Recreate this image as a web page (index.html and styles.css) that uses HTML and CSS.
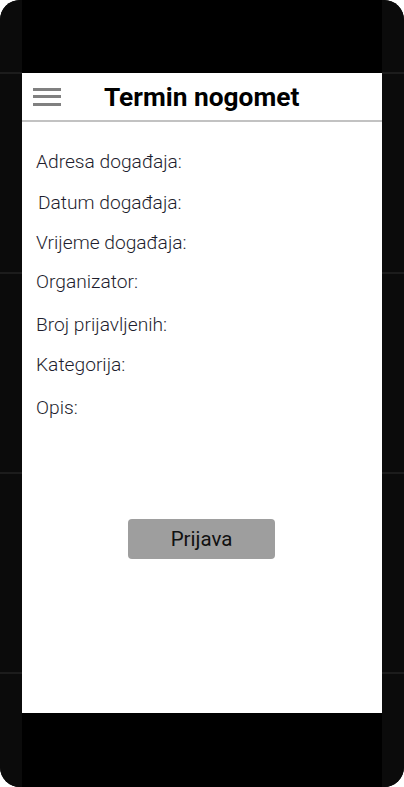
FILE: index.html
```html
<!DOCTYPE html>
<html>
<head>
<meta charset="utf-8">
<link rel="stylesheet" href="styles.css">
</head>
<body>
<div class="phone">
  <div class="side"></div>
  <div class="middle">
    <div class="bezel-top"></div>
    <div class="screen">
      <header class="appbar">
        <svg class="menu" width="28" height="20" viewBox="0 0 28 20">
          <rect x="0" y="1" width="28" height="3" fill="#808080"/>
          <rect x="0" y="8" width="28" height="3" fill="#808080"/>
          <rect x="0" y="16" width="28" height="3" fill="#808080"/>
        </svg>
        <h1 class="title">Termin nogomet</h1>
      </header>
      <div class="fields">
        <div class="field f1">Adresa događaja:</div>
        <div class="field f2">Datum događaja:</div>
        <div class="field f3">Vrijeme događaja:</div>
        <div class="field f4">Organizator:</div>
        <div class="field f5">Broj prijavljenih:</div>
        <div class="field f6">Kategorija:</div>
        <div class="field f7">Opis:</div>
      </div>
      <div class="actions">
        <button class="btn">Prijava</button>
      </div>
    </div>
    <div class="bezel-bottom"></div>
  </div>
  <div class="side"></div>
</div>
</body>
</html>
```

FILE: styles.css
```css
html, body {
  margin: 0;
  padding: 0;
  background: #ffffff;
}
.phone {
  width: 404px;
  height: 787px;
  border-radius: 20px;
  overflow: hidden;
  display: flex;
  background: #0b0b0b;
}
.side {
  width: 22px;
  flex: none;
  background:
    repeating-linear-gradient(to bottom,
      transparent 0, transparent 72px,
      #1c1c1c 72px, #1c1c1c 74px,
      transparent 74px, transparent 200px);
  background-color: #0b0b0b;
}
.middle {
  width: 360px;
  display: flex;
  flex-direction: column;
}
.bezel-top {
  height: 73px;
  background: #000;
}
.bezel-bottom {
  height: 74px;
  background: #000;
}
.screen {
  height: 640px;
  background: #fff;
  font-family: Roboto, "Liberation Sans", sans-serif;
  display: flex;
  flex-direction: column;
}
.appbar {
  height: 47px;
  border-bottom: 2px solid #c2c2c2;
  display: flex;
  align-items: center;
  box-sizing: content-box;
}
.menu {
  margin-left: 11px;
  flex: none;
}
.title {
  margin: 0 0 0 43px;
  font-size: 26.3px;
  font-weight: 700;
  color: #000;
  line-height: 1;
  padding-top: 2px;
}
.fields {
  padding: 0 0 0 14px;
  color: #1e1e2e;
  font-size: 19.2px;
  font-weight: 300;
}
.field {
  line-height: 22px;
  height: 22px;
}
.f1 { margin-top: 29px; }
.f2 { margin-top: 19px; padding-left: 2px; }
.f3 { margin-top: 18px; }
.f4 { margin-top: 17px; }
.f5 { margin-top: 21px; }
.f6 { margin-top: 18px; }
.f7 { margin-top: 21px; }
.actions {
  display: flex;
  margin-top: 100px;
  padding-left: 106px;
}
.btn {
  width: 147px;
  height: 40px;
  border: none;
  border-radius: 4px;
  background: #9e9e9e;
  color: #111;
  font-family: Roboto, "Liberation Sans", sans-serif;
  font-size: 20.5px;
  font-weight: 400;
  padding: 0;
}
```
